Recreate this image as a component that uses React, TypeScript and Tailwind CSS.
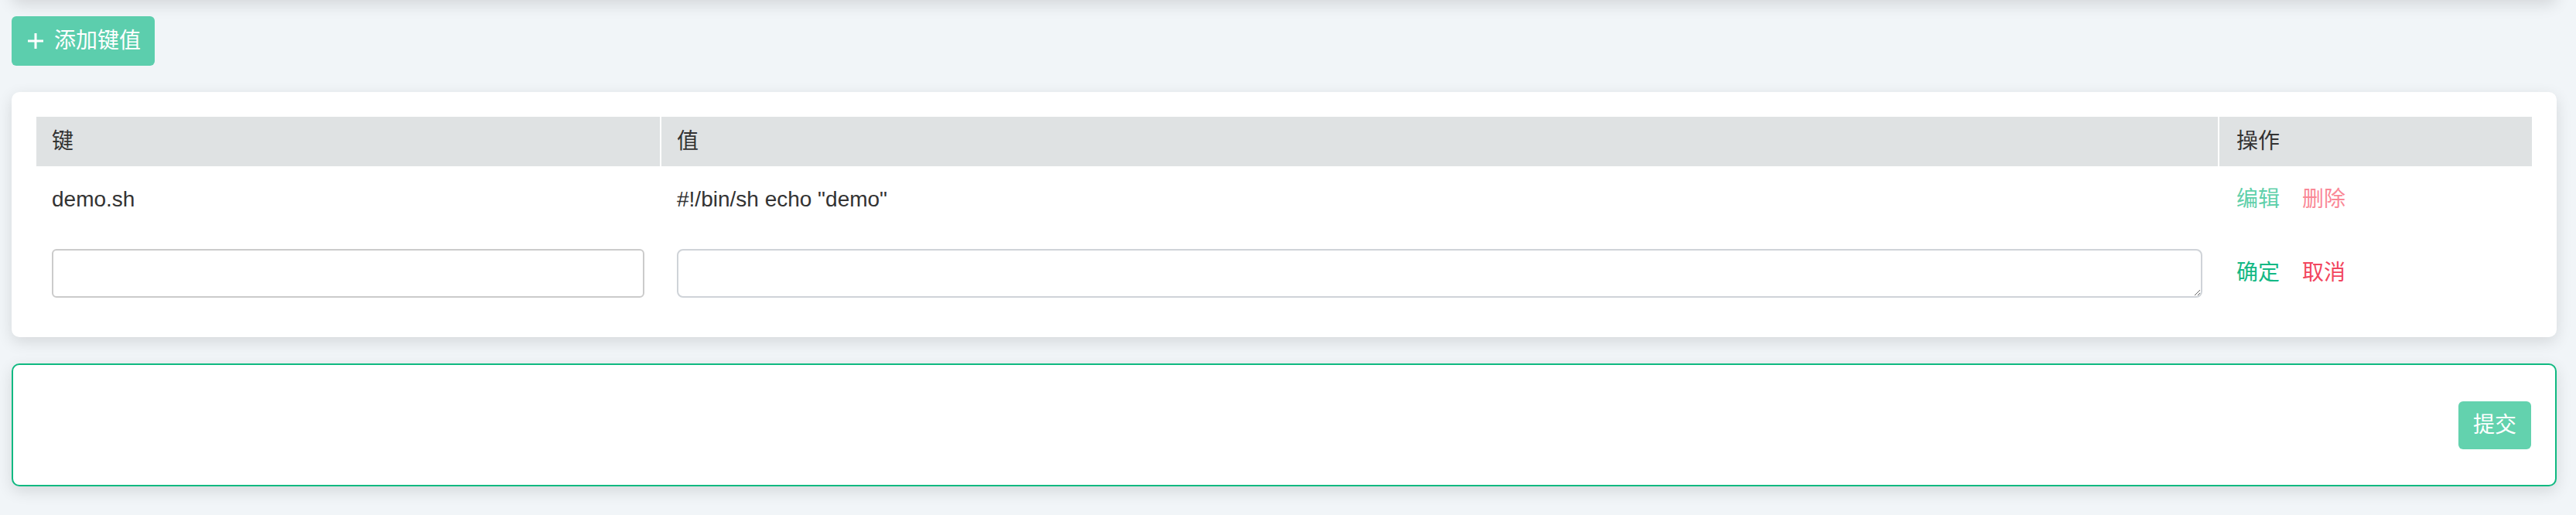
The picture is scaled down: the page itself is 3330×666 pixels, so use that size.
const font = { fontFamily: '"Liberation Sans", "Noto Sans CJK SC", sans-serif' };

const rows = [{ key: "demo.sh", value: '#!/bin/sh echo "demo"' }];

export default function App() {
  return (
    <div
      className="min-h-[666px] overflow-hidden bg-[#f1f5f8] pl-[15px] pr-[25px] pb-[40px] text-[28px] text-[#333]"
      style={font}
    >
      {/* panel sitting just above the viewport, only its shadow shows */}
      <div className="-mt-[40px] h-[40px] rounded-b-[10px] bg-white shadow-[0_6px_20px_rgba(0,0,0,0.12)]" />

      <button className="mt-[21px] flex h-[64px] items-center gap-[14px] rounded-[6px] bg-[#5ccead] pl-[21px] pr-[18px] text-[28px] leading-none text-white">
        <svg width="20" height="20" viewBox="0 0 20 20" className="shrink-0">
          <path d="M10 0v20M0 10h20" stroke="currentColor" strokeWidth="3" fill="none" />
        </svg>
        <span>添加键值</span>
      </button>

      <div className="mt-[34px] rounded-[10px] bg-white px-[32px] pt-[32px] pb-[31px] shadow-[0_6px_20px_rgba(0,0,0,0.12)]">
        <div className="grid grid-cols-[806px_1fr_404px] gap-x-[2px]">
          <div className="flex h-[64px] items-center bg-[#dfe2e3] pl-[20px]">键</div>
          <div className="flex h-[64px] items-center bg-[#dfe2e3] pl-[20px]">值</div>
          <div className="flex h-[64px] items-center bg-[#dfe2e3] pl-[22px]">操作</div>

          {rows.map((r, i) => (
            <div key={i} className="contents">
              <div className="flex h-[86px] items-center pl-[20px]">{r.key}</div>
              <div className="flex h-[86px] items-center pl-[20px]">{r.value}</div>
              <div className="flex h-[86px] items-center gap-[29px] pl-[22px]">
                <span className="text-[#5fd0aa]">编辑</span>
                <span className="text-[#fa8896]">删除</span>
              </div>
            </div>
          ))}

          <div className="flex h-[104px] items-center px-[20px]">
            <input className="h-[63px] w-full rounded-[6px] border-2 border-[#cbcbcb] bg-white px-[12px] text-[28px] outline-none" />
          </div>
          <div className="flex h-[104px] items-center px-[20px]">
            <textarea
              rows={1}
              className="block h-[63px] w-full rounded-[8px] border-2 border-[#cfd3d8] bg-white px-[12px] text-[28px] outline-none"
            />
          </div>
          <div className="flex h-[104px] items-center gap-[29px] pl-[22px]">
            <span className="text-[#13b884]">确定</span>
            <span className="text-[#f2465e]">取消</span>
          </div>
        </div>
      </div>

      <div className="mt-[34px] flex h-[159px] items-center justify-end rounded-[10px] border-2 border-[#10b981] bg-white pr-[31px] shadow-[0_6px_20px_rgba(0,0,0,0.12)]">
        <button className="flex h-[62px] items-center rounded-[6px] bg-[#63d2ae] px-[19px] text-[28px] leading-none text-white">
          提交
        </button>
      </div>
    </div>
  );
}
